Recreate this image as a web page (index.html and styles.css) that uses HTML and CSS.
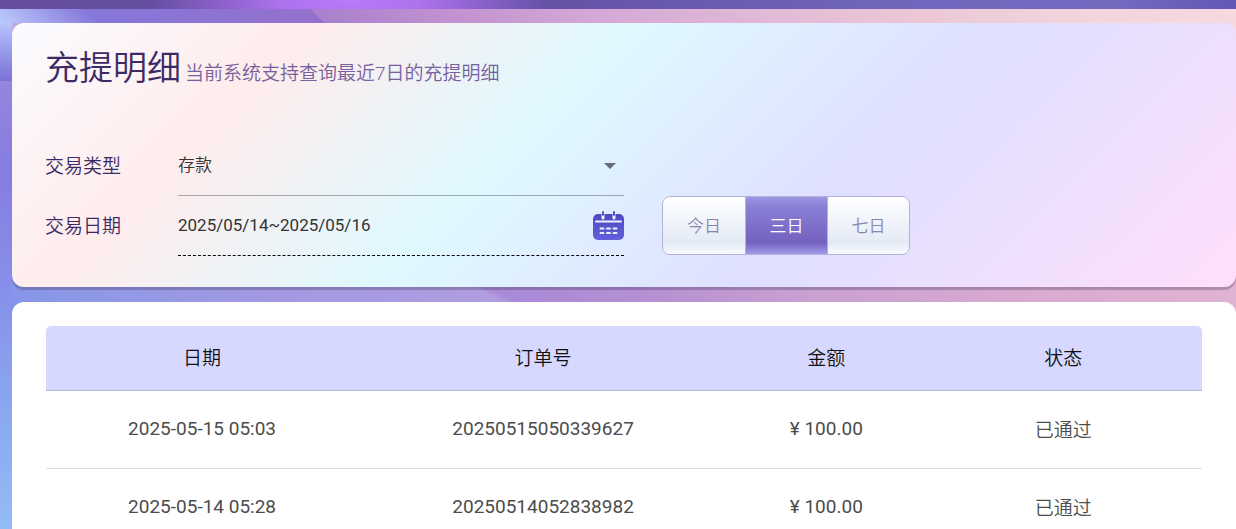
FILE: index.html
```html
<!DOCTYPE html>
<html lang="zh-CN">

<head>
   <meta charset="UTF-8">
   <meta name="viewport" content="width=device-width, initial-scale=1.0">
   <title>充提明细</title>
   <link rel="stylesheet" href="styles.css">
</head>

<body>
   <div class="topbar"></div>

   <main class="page">
      <!-- Search form -->
      <section class="card search-card">
         <header class="card-head">
            <h1>充提明细</h1>
            <p>当前系统支持查询最近7日的充提明细</p>
         </header>

         <form class="search-form">
            <label for="type">交易类型</label>
            <div class="field">
               <select id="type" name="type">
                  <option>存款</option>
                  <option>取款</option>
               </select>
               <svg class="arrow" viewBox="0 0 12 6" aria-hidden="true">
                  <path d="M0 0h12L6 6z" />
               </svg>
            </div>

            <label class="date-label" for="date">交易日期</label>
            <div class="field field-date">
               <input type="text" id="date" name="date" value="2025/05/14~2025/05/16" readonly>
               <button type="button" class="calendar" aria-label="选择日期">
                  <svg viewBox="0 0 31 30" aria-hidden="true">
                     <defs>
                        <linearGradient id="calFill" x1="0" y1="0" x2="0" y2="1">
                           <stop offset="0" stop-color="#4c49c2" />
                           <stop offset="1" stop-color="#6260da" />
                        </linearGradient>
                     </defs>
                     <rect x="0" y="3" width="31" height="26" rx="5" fill="url(#calFill)" />
                     <path d="M10 3v4M21 3v4" stroke="#eef0ff" stroke-width="3" stroke-linecap="round" />
                     <path d="M10 1v3M21 1v3" stroke="#5552c8" stroke-width="2" stroke-linecap="round" />
                     <path d="M3 10.500h25" stroke="#eef0ff" stroke-width="2" stroke-linecap="round" />
                     <path d="M7.500 17.500h3M14 17.500h3M20.500 17.500h3M7.500 22h3M14 22h3M20.500 22h3" stroke="#eef0ff" stroke-width="2" stroke-linecap="round" />
                  </svg>
               </button>
            </div>

            <div class="range">
               <button type="button">今日</button>
               <button type="button" class="active">三日</button>
               <button type="button">七日</button>
            </div>
         </form>
      </section>

      <!-- Records -->
      <section class="card list-card">
         <table>
            <thead>
               <tr>
                  <th class="col-date">日期</th>
                  <th class="col-order">订单号</th>
                  <th class="col-amount">金额</th>
                  <th class="col-status">状态</th>
               </tr>
            </thead>
            <tbody>
               <tr>
                  <td>2025-05-15 05:03</td>
                  <td>20250515050339627</td>
                  <td>¥ 100.00</td>
                  <td>已通过</td>
               </tr>
               <tr>
                  <td>2025-05-14 05:28</td>
                  <td>20250514052838982</td>
                  <td>¥ 100.00</td>
                  <td>已通过</td>
               </tr>
            </tbody>
         </table>
      </section>
   </main>
</body>

</html>
```
FILE: styles.css
```css
* {
   box-sizing: border-box;
}

html {
   overflow: hidden;
}

body {
   margin: 0;
   font-family: Roboto, "Noto Sans CJK SC", sans-serif;
   font-weight: 350;
   font-size: 19px;
   color: #3c2a64;
}

button,
input,
select {
   font: inherit;
}

.topbar {
   height: 9px;
   background: radial-gradient(200px 60px at 350px 0, #bb78fc 0%, rgba(186, 120, 250, 0.85) 35%, rgba(170, 110, 235, 0) 100%),
      linear-gradient(90deg, #664d9f 0%, #6450a5 42%, #7068be 75%, #7569c0 90%, #6257b3 100%);
}

/* Page background: left edge, top band, then the base */
.page {
   min-height: 520px;
   padding: 14px 0 0 12px;
   background:
      linear-gradient(45deg, #bccbff 0%, #8577d9 8%, #9470cd 26%, #a880cc 26%, #c090d0 36%, #d4a8d6 48%, #e2b9d6 62%, #ecc8d6 75%, #f3d5dc 88%, #f6dadf 100%) 0 0 / 100% 14px no-repeat,
      linear-gradient(10deg, #8f82df 0%, #7a70d8 1%, #b8c5fd 100%) 0 14px / 12px 58px no-repeat,
      linear-gradient(180deg, #9585de 0%, #867de0 20%, #8790ea 47%, #8aa8f0 74%, #93bbf6 100%) 0 72px / 12px 448px no-repeat,
      linear-gradient(90deg, #c3a8e0 0%, #f6dadf 100%) 0 14px / 100% 20px no-repeat,
      linear-gradient(27deg, #8092ec 0%, #8c98e6 8%, #a299e2 23%, #b09de0 39%, #a98ad8 40%, #b48fd2 50%, #c89fd2 61%, #d8aad0 77%, #e3b7d3 100%) 0 240px / 100% 70px no-repeat,
      #e9c4d4;
}

.card {
   border-radius: 12px;
}

.search-card {
   margin-bottom: 15px;
   padding: 23px 33px 31px;
   background: linear-gradient(135deg, #fafbff 0%, #ffecec 20%, #dff9ff 42%, #dfdfff 67%, #ffdffb 100%);
   box-shadow: 0 3px 1px rgba(60, 50, 90, 0.3);
}

.card-head {
   display: flex;
   align-items: baseline;
   gap: 4px;
   height: 90px;
}

.card-head h1 {
   margin: 0;
   font-size: 34px;
   font-weight: 350;
   line-height: 44px;
}

.card-head p {
   margin: 0;
   color: #76609c;
}

.search-form {
   display: grid;
   grid-template-columns: 133px minmax(0, 446px) auto;
   grid-auto-rows: 60px;
   align-items: center;
   justify-content: start;
}

.search-form label {
   padding-bottom: 4px;
}

.date-label {
   grid-column: 1;
}

.field {
   display: flex;
   align-items: center;
   position: relative;
   height: 60px;
   border-bottom: 1px solid rgba(0, 0, 0, 0.3);
   font-size: 17px;
   color: #333;
}

.field-date {
   border-bottom: 1px dashed #000;
}

.field select,
.field input {
   flex: 1;
   min-width: 0;
   height: 100%;
   padding: 0 0 2px;
   border: 0;
   outline: 0;
   appearance: none;
   background: transparent;
   color: inherit;
}

.field input {
   font-weight: 400;
}

.arrow {
   position: absolute;
   right: 8px;
   width: 12px;
   height: 6px;
   fill: #666c75;
   pointer-events: none;
}

.calendar {
   width: 31px;
   height: 30px;
   padding: 0;
   border: 0;
   background: none;
   cursor: pointer;
}

.calendar svg {
   display: block;
   width: 31px;
   height: 30px;
}

/* Quick range buttons */
.range {
   display: flex;
   height: 59px;
   margin-left: 38px;
   border: 1px solid #b3b0dc;
   border-radius: 8px;
   overflow: hidden;
   align-self: start;
}

.range button {
   width: 82px;
   padding: 0 0 2px;
   border: 0;
   font-size: 17px;
   color: #8986ad;
   background: linear-gradient(180deg, #fff 0%, #e4eaf5 80%, #f8faff 100%);
   cursor: pointer;
}

.range button + button {
   border-left: 1px solid #b3b0dc;
}

.range .active {
   color: #fff;
   background: linear-gradient(180deg, #9c98e4 0%, #8a80d6 15%, #7462c0 80%, #a19be8 100%);
}

/* Table styling */
.list-card {
   min-height: 227px;
   padding: 24px 34px 0;
   background: #fff;
}

table {
   width: 100%;
   table-layout: fixed;
   border-collapse: separate;
   border-spacing: 0;
   text-align: center;
}

th {
   height: 65px;
   padding: 0 0 4px;
   font-weight: 350;
   color: #111;
   background: #d7d8ff;
   border-bottom: 1px solid #b9b9dd;
}

th:first-child {
   border-top-left-radius: 5px;
}

th:last-child {
   border-top-right-radius: 5px;
}

td {
   height: 78px;
   padding: 0 0 3px;
   font-weight: 400;
   color: #4c4c4c;
   border-bottom: 1px solid #ddd;
}

td:last-child {
   font-weight: 350;
}

.col-date {
   width: 27%;
}

.col-order {
   width: 32%;
}

.col-amount {
   width: 17%;
}

.col-status {
   width: 24%;
}
```
